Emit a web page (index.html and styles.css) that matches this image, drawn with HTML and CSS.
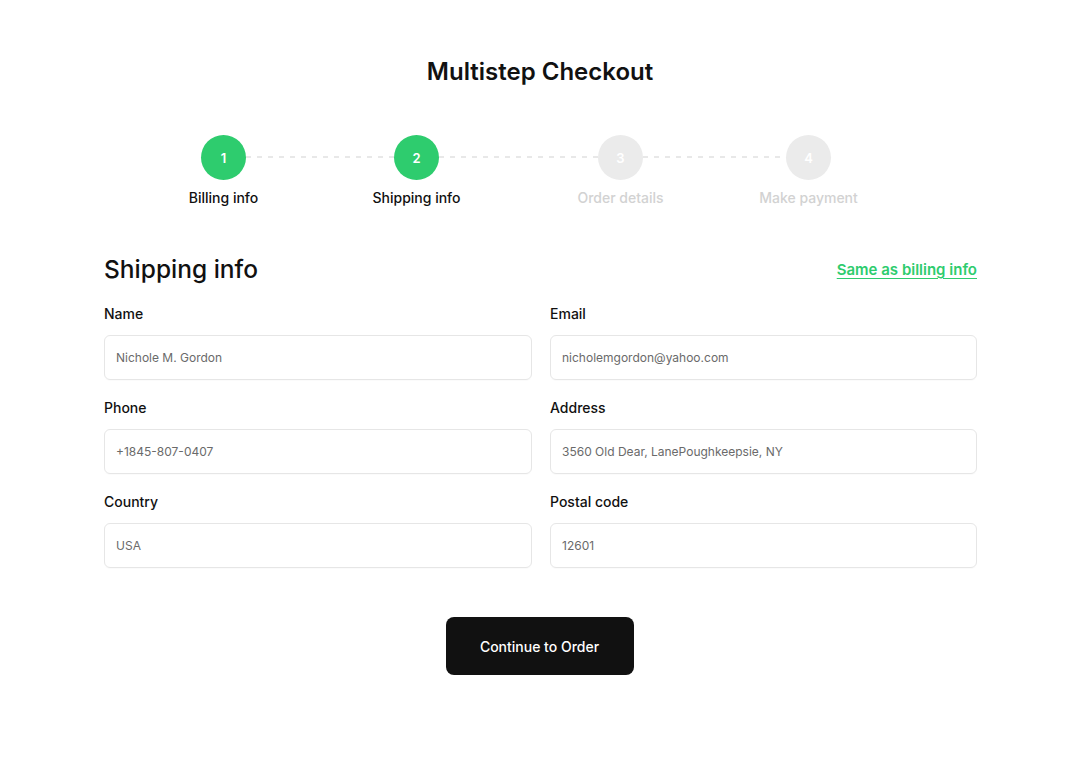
FILE: index.html
```html
<!DOCTYPE html>
<html lang="en">
<head>
<meta charset="utf-8">
<title>Multistep Checkout</title>
<link rel="stylesheet" href="styles.css">
</head>
<body>
<main class="page">
  <h1 class="title">Multistep Checkout</h1>

  <div class="stepper">
    <div class="step done">
      <div class="dot">1</div>
      <div class="step-label">Billing info</div>
    </div>
    <div class="connector c1"></div>
    <div class="step done">
      <div class="dot">2</div>
      <div class="step-label">Shipping info</div>
    </div>
    <div class="connector c2"></div>
    <div class="step">
      <div class="dot">3</div>
      <div class="step-label">Order details</div>
    </div>
    <div class="connector c3"></div>
    <div class="step">
      <div class="dot">4</div>
      <div class="step-label">Make payment</div>
    </div>
  </div>

  <section class="form-card">
    <div class="form-head">
      <h2 class="section-title">Shipping info</h2>
      <a class="same-link" href="#">Same as billing info</a>
    </div>
    <div class="form-grid">
      <div class="field">
        <label class="field-label">Name</label>
        <div class="input">Nichole M. Gordon</div>
      </div>
      <div class="field">
        <label class="field-label">Email</label>
        <div class="input">nicholemgordon@yahoo.com</div>
      </div>
      <div class="field">
        <label class="field-label">Phone</label>
        <div class="input">+1845-807-0407</div>
      </div>
      <div class="field">
        <label class="field-label">Address</label>
        <div class="input">3560 Old Dear, LanePoughkeepsie, NY</div>
      </div>
      <div class="field">
        <label class="field-label">Country</label>
        <div class="input">USA</div>
      </div>
      <div class="field">
        <label class="field-label">Postal code</label>
        <div class="input">12601</div>
      </div>
    </div>
    <div class="actions">
      <button class="btn" type="button">Continue to Order</button>
    </div>
  </section>
</main>
</body>
</html>
```

FILE: styles.css
```css
* { box-sizing: border-box; }

html, body {
  margin: 0;
  padding: 0;
  background: #ffffff;
}

body {
  font-family: Inter, "Noto Sans", "Liberation Sans", sans-serif;
  color: #111111;
  width: 1080px;
}

.page {
  padding-top: 57px;
}

.title {
  margin: 0;
  text-align: center;
  font-size: 24px;
  line-height: 30px;
  font-weight: 600;
  color: #111111;
}

.stepper {
  display: flex;
  align-items: flex-start;
  margin-top: 48px;
  padding-left: 201px;
}

.step {
  width: 45px;
  display: flex;
  flex-direction: column;
  align-items: center;
}

.dot {
  width: 45px;
  height: 45px;
  border-radius: 50%;
  background: #ebebeb;
  color: #ffffff;
  font-size: 13px;
  font-weight: 600;
  display: flex;
  align-items: center;
  justify-content: center;
}

.step.done .dot {
  background: #2ecc6e;
}

.step-label {
  margin-top: 9px;
  white-space: nowrap;
  font-size: 14px;
  line-height: 18px;
  font-weight: 500;
  color: #d2d2d2;
}

.step.done .step-label {
  color: #111111;
}

.connector {
  height: 2px;
  margin-top: 21px;
  background: repeating-linear-gradient(to right, #e8e8e8 0 5px, transparent 5px 11px);
}

.connector.c1 { width: 148px; }
.connector.c2 { width: 159px; }
.connector.c3 { width: 143px; }

.form-card {
  width: 873px;
  margin: 0 0 0 104px;
  padding-top: 47px;
}

.form-head {
  display: flex;
  align-items: center;
  justify-content: space-between;
}

.section-title {
  margin: 0;
  font-size: 24.5px;
  line-height: 30px;
  font-weight: 500;
}

.same-link {
  color: #2ecc6e;
  font-size: 15px;
  font-weight: 600;
  text-decoration: underline;
  text-underline-offset: 3px;
  text-decoration-thickness: 1px;
}

.form-grid {
  display: grid;
  grid-template-columns: 428px 427px;
  column-gap: 18px;
  row-gap: 19px;
  margin-top: 21px;
}

.field {
  display: flex;
  flex-direction: column;
}

.field-label {
  font-size: 14px;
  line-height: 18px;
  font-weight: 500;
  color: #111111;
}

.input {
  margin-top: 12px;
  height: 45px;
  border: 1px solid #e6e6e6;
  border-radius: 6px;
  padding: 0 11px;
  display: flex;
  align-items: center;
  font-size: 12px;
  color: #6a6a6a;
  box-shadow: 0 1px 1px rgba(0, 0, 0, 0.02);
}

.actions {
  display: flex;
  justify-content: center;
  margin-top: 49px;
  padding-right: 2px;
}

.btn {
  width: 188px;
  height: 58px;
  border: none;
  border-radius: 8px;
  background: #111111;
  color: #ffffff;
  font-family: inherit;
  font-size: 14px;
  font-weight: 500;
  cursor: pointer;
}
```
